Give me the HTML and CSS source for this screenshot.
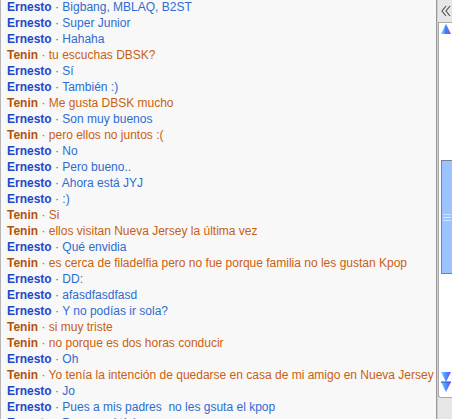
FILE: index.html
```html
<!DOCTYPE html>
<html>
<head>
    <title>Chat log</title>
    <link rel="stylesheet" href="styles.css">
</head>
<body>
    <div class="window">
        <div class="log">
            <ul class="lines">
                <li class="ernesto"><b>Ernesto</b> <span>· Bigbang, MBLAQ, B2ST</span></li>
                <li class="ernesto"><b>Ernesto</b> <span>· Super Junior</span></li>
                <li class="ernesto"><b>Ernesto</b> <span>· Hahaha</span></li>
                <li class="tenin"><b>Tenin</b> <span>· tu escuchas DBSK?</span></li>
                <li class="ernesto"><b>Ernesto</b> <span>· Sí</span></li>
                <li class="ernesto"><b>Ernesto</b> <span>· También :)</span></li>
                <li class="tenin"><b>Tenin</b> <span>· Me gusta DBSK mucho</span></li>
                <li class="ernesto"><b>Ernesto</b> <span>· Son muy buenos</span></li>
                <li class="tenin"><b>Tenin</b> <span>· pero ellos no juntos :(</span></li>
                <li class="ernesto"><b>Ernesto</b> <span>· No</span></li>
                <li class="ernesto"><b>Ernesto</b> <span>· Pero bueno..</span></li>
                <li class="ernesto"><b>Ernesto</b> <span>· Ahora está JYJ</span></li>
                <li class="ernesto"><b>Ernesto</b> <span>· :)</span></li>
                <li class="tenin"><b>Tenin</b> <span>· Si</span></li>
                <li class="tenin"><b>Tenin</b> <span>· ellos visitan Nueva Jersey la última vez</span></li>
                <li class="ernesto"><b>Ernesto</b> <span>· Qué envidia</span></li>
                <li class="tenin"><b>Tenin</b> <span>· es cerca de filadelfia pero no fue porque familia no les gustan Kpop</span></li>
                <li class="ernesto"><b>Ernesto</b> <span>· DD:</span></li>
                <li class="ernesto"><b>Ernesto</b> <span>· afasdfasdfasd</span></li>
                <li class="ernesto"><b>Ernesto</b> <span>· Y no podías ir sola?</span></li>
                <li class="tenin"><b>Tenin</b> <span>· si muy triste</span></li>
                <li class="tenin"><b>Tenin</b> <span>· no porque es dos horas conducir</span></li>
                <li class="ernesto"><b>Ernesto</b> <span>· Oh</span></li>
                <li class="tenin"><b>Tenin</b> <span>· Yo tenía la intención de quedarse en casa de mi amigo en Nueva Jersey</span></li>
                <li class="ernesto"><b>Ernesto</b> <span>· Jo</span></li>
                <li class="ernesto"><b>Ernesto</b> <span>· Pues a mis padres &nbsp;no les gsuta el kpop</span></li>
                <li class="ernesto"><b>Ernesto</b> <span>· Pero es el típico</span></li>
            </ul>
        </div>

        <div class="side">
            <div class="collapse">
                <svg width="10" height="12" viewBox="0 0 10 12">
                    <polyline points="5,1 1,6 5,11" fill="none" stroke="#555" stroke-width="1.2"/>
                    <polyline points="9,1 5,6 9,11" fill="none" stroke="#555" stroke-width="1.2"/>
                </svg>
            </div>
            <div class="track">
                <svg class="arrow-up" width="10" height="10" viewBox="0 0 10 10">
                    <defs>
                        <linearGradient id="gUp" x1="0" y1="0" x2="1" y2="0">
                            <stop offset="0" stop-color="#6fd6ff"/>
                            <stop offset="0.5" stop-color="#4f8cff"/>
                            <stop offset="1" stop-color="#6b4cff"/>
                        </linearGradient>
                    </defs>
                    <polygon points="5,0 10,10 0,10" fill="url(#gUp)"/>
                    <polygon points="5,0 6,10 4,10" fill="#3050d8" opacity="0.5"/>
                </svg>
                <div class="thumb">
                    <i></i><i></i><i></i>
                </div>
                <div class="arrows-down">
                    <svg width="10" height="20" viewBox="0 0 10 20">
                        <defs>
                            <linearGradient id="gDown" x1="0" y1="0" x2="1" y2="0">
                                <stop offset="0" stop-color="#6fd6ff"/>
                                <stop offset="0.5" stop-color="#4f8cff"/>
                                <stop offset="1" stop-color="#6b4cff"/>
                            </linearGradient>
                        </defs>
                        <polygon points="0,0 10,0 5,10" fill="url(#gDown)"/>
                        <polygon points="0,10 10,10 5,20" fill="url(#gDown)"/>
                        <line x1="0" y1="10" x2="10" y2="10" stroke="#2a4cc0" stroke-width="1"/>
                    </svg>
                </div>
            </div>
        </div>
    </div>
</body>
</html>
```

FILE: styles.css
```css
html, body {
    margin: 0;
    padding: 0;
    height: 100%;
    overflow: hidden;
}

body {
    font-family: 'Liberation Sans', Arial, Helvetica, sans-serif;
    font-size: 12px;
    background: #e6e6e6;
}

.window {
    display: flex;
    height: 419px;
}

.log {
    box-sizing: border-box;
    width: 437px;
    height: 419px;
    overflow: hidden;
    background: #f8f8f8;
    border-left: 1px solid #b4b4b4;
    border-right: 1px solid #999;
}

.lines {
    list-style: none;
    margin: -1px 0 0 0;
    padding: 0 0 0 6px;
}

.lines li {
    height: 16px;
    line-height: 16px;
    white-space: nowrap;
}

.lines b {
    font-weight: bold;
}

.ernesto b {
    color: #2147c9;
}

.ernesto span {
    color: #2f6ccf;
}

.tenin b {
    color: #b4520d;
}

.tenin span {
    color: #c9600f;
}

.side {
    box-sizing: border-box;
    width: 15px;
    border-left: 1px solid #cfcfcf;
    background: #e6e6e6;
    display: flex;
    flex-direction: column;
}

.collapse {
    height: 22px;
    display: flex;
    align-items: center;
    justify-content: center;
    padding-left: 1px;
}

.track {
    box-sizing: border-box;
    height: 376px;
    margin-left: 0;
    background: #fff;
    border: 1px solid #aaa;
    border-right: none;
    border-radius: 0 0 0 3px;
    padding: 1px 0 0 2px;
    display: flex;
    flex-direction: column;
}

.arrow-up {
    display: block;
}

.thumb {
    box-sizing: border-box;
    margin-top: 126px;
    height: 114px;
    width: 12px;
    background: #9cc3ff;
    border: 1px solid #7a8290;
    border-right-color: #3c4048;
    display: flex;
    flex-direction: column;
    align-items: center;
    justify-content: center;
    gap: 2px;
}

.thumb i {
    display: block;
    width: 8px;
    height: 1px;
    background: #d4e4ff;
}

.arrows-down {
    margin-top: 98px;
}

.arrows-down svg {
    display: block;
}
```
